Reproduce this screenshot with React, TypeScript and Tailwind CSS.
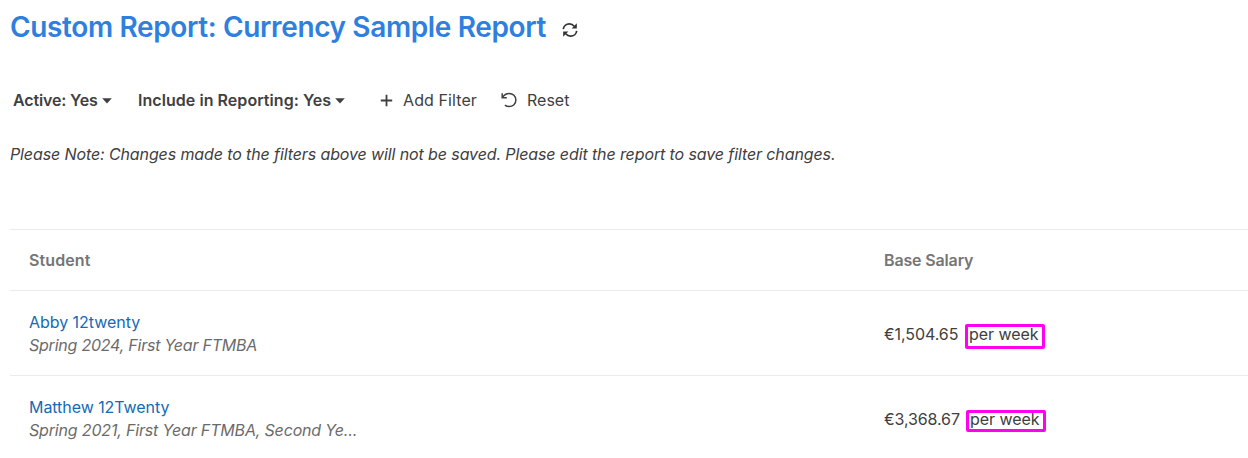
import React from 'react';

type Student = {
  name: string;
  details: string;
  salary: string;
  nameClass: string;
  detailsClass: string;
  salaryClass: string;
  periodClass: string;
  outlineClass: string;
};

const students: Student[] = [
  {
    name: 'Abby 12twenty',
    details: 'Spring 2024, First Year FTMBA',
    salary: '€1,504.65',
    nameClass: 'tracking-[-0.04px]',
    detailsClass: 'tracking-[-0.23px]',
    salaryClass: 'tracking-[-0.08px]',
    periodClass: 'ml-[85px]',
    outlineClass: 'left-[-4px] top-[2px] w-[80px] h-[25px]',
  },
  {
    name: 'Matthew 12Twenty',
    details: 'Spring 2021, First Year FTMBA, Second Ye...',
    salary: '€3,368.67',
    nameClass: 'tracking-[-0.06px]',
    detailsClass: 'tracking-[-0.17px]',
    salaryClass: 'tracking-[-0.12px]',
    periodClass: 'ml-[86px]',
    outlineClass: 'left-[-4px] top-[3px] w-[80px] h-[22px]',
  },
];

const Caret: React.FC = () => (
  <svg className="mt-[2px] h-[6px] w-[10px] shrink-0" viewBox="0 0 10 6" fill="currentColor">
    <path d="M.2.2h9.6L5 5.6z" />
  </svg>
);

const RefreshIcon: React.FC = () => (
  <svg className="mt-[5px] h-4 w-4 shrink-0 text-[#333]" viewBox="0 0 16 16" fill="none">
    <path d="M1.3 7.2C1.6 4.1 4.2 1.9 7.400 1.900c2 0 3.700.9 4.800 2.300" stroke="currentColor" strokeWidth="1.7" />
    <path d="M14.700 8.800c-.3 3.100-2.900 5.300-6.100 5.300-2 0-3.700-.9-4.800-2.300" stroke="currentColor" strokeWidth="1.7" />
    <path d="M14.800 1.300v5.100H9.700z" fill="currentColor" />
    <path d="M1.200 14.700V9.600h5.100z" fill="currentColor" />
  </svg>
);

const Toolbar: React.FC = () => (
  <div className="flex h-6 items-center pl-[3px] text-base text-[#404040]">
    <button className="flex w-[125px] items-center gap-1 font-semibold">
      <span className="whitespace-nowrap tracking-[-0.15px]">Active: Yes</span>
      <Caret />
    </button>
    <button className="flex w-[242px] items-center gap-1 font-semibold">
      <span className="whitespace-nowrap tracking-[0.05px]">Include in Reporting: Yes</span>
      <Caret />
    </button>
    <button className="flex w-[121px] items-center gap-[10px]">
      <svg className="h-[13px] w-[13px] shrink-0" viewBox="0 0 13 13" fill="none" stroke="currentColor" strokeWidth="1.8">
        <path d="M6.5.8v11.4M.8 6.500h11.400" />
      </svg>
      <span className="whitespace-nowrap tracking-[0.1px]">Add Filter</span>
    </button>
    <button className="flex items-center gap-[10px]">
      <svg className="h-4 w-4 shrink-0" viewBox="0 0 16 16" fill="none" stroke="currentColor" strokeWidth="1.5">
        <path d="M1.200 1.200v4.600h4.600" />
        <path d="M1.500 5.500C3 2.900 5.500 1.400 8.200 1.400c3.800 0 6.700 2.900 6.700 6.600s-2.900 6.600-6.700 6.600c-1.700 0-3.100-.5-4.300-1.500" />
      </svg>
      <span className="whitespace-nowrap tracking-[0px]">Reset</span>
    </button>
  </div>
);

const App: React.FC = () => {
  return (
    <main className="h-[458px] overflow-hidden bg-white pl-[10px] pt-[9px] font-['Inter',sans-serif] text-base text-[#404040]">
      <header className="flex h-9 items-center gap-4">
        <h1 className="whitespace-nowrap text-[28px] font-semibold leading-9 tracking-[-0.37px] text-[#2f80de]">
          Custom Report: Currency Sample Report
        </h1>
        <RefreshIcon />
      </header>

      <div className="mt-[43px]">
        <Toolbar />
      </div>

      <p className="mt-[30px] whitespace-nowrap italic leading-6 tracking-[-0.11px]">
        Please Note: Changes made to the filters above will not be saved. Please edit the report to save filter changes.
      </p>

      <section className="mt-[63px] border-t border-[#ececec]">
        <div className="flex h-[61px] items-center border-b border-[#ececec] pl-[19px] font-semibold text-[#757575]">
          <div className="w-[855px]"><span className="tracking-[0.1px]">Student</span></div>
          <div><span className="tracking-[-0.15px]">Base Salary</span></div>
        </div>
        {students.map((student) => (
          <div key={student.name} className="flex h-[85px] items-center border-b border-[#ececec] pl-[19px] pt-[2px]">
            <div className="w-[855px] leading-[23px]">
              <div className="text-[#1769b5]"><span className={student.nameClass}>{student.name}</span></div>
              <div className="italic text-[#6b6b6b]"><span className={student.detailsClass}>{student.details}</span></div>
            </div>
            <div className="flex leading-6">
              <span className="w-0 whitespace-nowrap"><span className={student.salaryClass}>{student.salary}</span></span>
              <span className={`relative whitespace-nowrap ${student.periodClass}`}>
                <span className="tracking-[-0.05px]">per week</span>
                <span className={`absolute rounded-[2px] border-[3px] border-[#ff00f0] ${student.outlineClass}`} />
              </span>
            </div>
          </div>
        ))}
      </section>
    </main>
  );
};

export default App;
